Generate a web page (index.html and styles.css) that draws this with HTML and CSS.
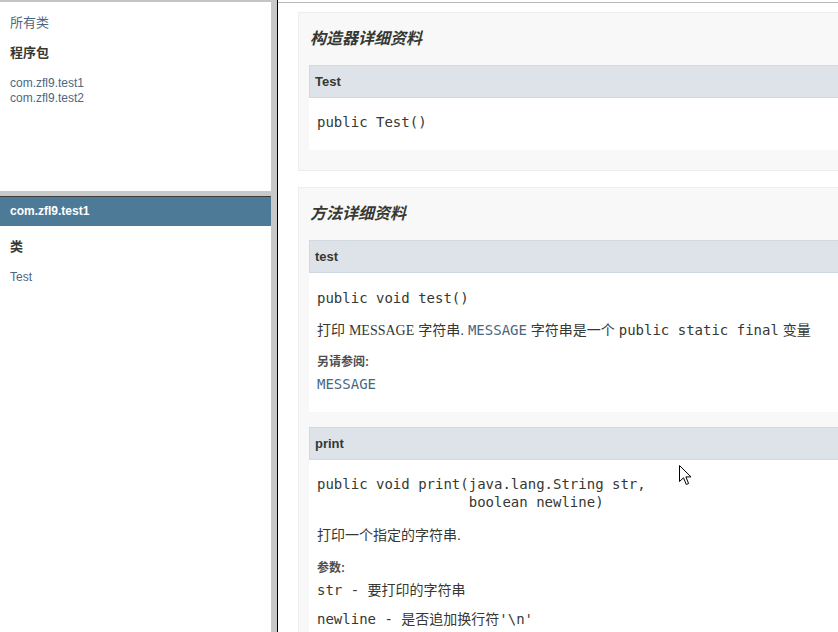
FILE: index.html
```html
<!DOCTYPE html>
<html lang="zh-CN">
<head>
<meta charset="utf-8">
<title>Test</title>
<link rel="stylesheet" href="styles.css">
</head>
<body>
<div class="frameset">
  <div class="left">
    <div class="pkg-frame">
      <div class="index-header">所有类</div>
      <h2 class="frame-title">程序包</h2>
      <ul class="frame-list">
        <li>com.zfl9.test1</li>
        <li>com.zfl9.test2</li>
      </ul>
    </div>
    <div class="hsplit"></div>
    <div class="cls-frame">
      <div class="bar">com.zfl9.test1</div>
      <h2 class="frame-title cls-title">类</h2>
      <ul class="frame-list cls-list">
        <li>Test</li>
      </ul>
    </div>
  </div>
  <div class="vsplit"></div>
  <div class="right">
    <section class="block">
      <h3 class="block-title">构造器详细资料</h3>
      <div class="member">
        <h4 class="member-name">Test</h4>
        <div class="member-body">
          <pre class="sig">public&nbsp;Test()</pre>
        </div>
      </div>
    </section>
    <section class="block second">
      <h3 class="block-title">方法详细资料</h3>
      <div class="member">
        <h4 class="member-name">test</h4>
        <div class="member-body">
          <pre class="sig">public&nbsp;void&nbsp;test()</pre>
          <p class="desc">打印 <span class="serif">MESSAGE</span> 字符串. <code class="link">MESSAGE</code> 字符串是一个 <code>public static final</code> 变量</p>
          <div class="label see-label">另请参阅:</div>
          <div class="mono-line link see-link">MESSAGE</div>
        </div>
      </div>
      <div class="member">
        <h4 class="member-name">print</h4>
        <div class="member-body print-body">
          <pre class="sig">public&nbsp;void&nbsp;print(java.lang.String&nbsp;str,
                  boolean&nbsp;newline)</pre>
          <p class="desc desc2">打印一个指定的字符串.</p>
          <div class="label param-label">参数:</div>
          <div class="mono-line param1">str - 要打印的字符串</div>
          <div class="mono-line param2">newline - 是否追加换行符'\n'</div>
        </div>
      </div>
    </section>
    <svg class="cursor" width="13" height="21" viewBox="0 0 13 21" aria-hidden="true">
      <path d="M0.5 0.5 L0.5 16.5 L4.5 12.8 L7.3 19.5 L9.6 18.5 L6.9 11.9 L12 11.9 Z" fill="#ffffff" stroke="#000000" stroke-width="1" stroke-linejoin="miter"/>
    </svg>
  </div>
</div>
</body>
</html>
```

FILE: styles.css
```css
html, body {
  margin: 0;
  padding: 0;
  background: #ffffff;
}

body {
  width: 838px;
  height: 632px;
  overflow: hidden;
  font-family: "Liberation Sans", Arial, "Noto Sans CJK SC", sans-serif;
  color: #353833;
}

.frameset {
  display: flex;
  height: 632px;
}

/* ---------- left column ---------- */
.left {
  width: 271px;
  flex: none;
  display: flex;
  flex-direction: column;
  border-top: 2px solid #c4c4c4;
}

.pkg-frame {
  height: 189px;
  padding: 13px 10px 0;
  box-sizing: border-box;
}

.index-header {
  font-size: 13px;
  line-height: 16px;
  color: #4a6782;
}

.frame-title {
  margin: 14px 0 0;
  font-size: 13px;
  line-height: 16px;
  font-weight: bold;
  color: #353833;
}

.frame-list {
  list-style: none;
  margin: 15px 0 0;
  padding: 0;
  font-size: 12px;
  line-height: 15px;
  color: #4a6782;
}

.hsplit {
  height: 5px;
  background: #c8c8c8;
  border-bottom: 1px solid #3c3c3c;
}

.cls-frame {
  flex: 1;
}

.bar {
  height: 29px;
  line-height: 29px;
  padding-left: 10px;
  background: #4d7a97;
  color: #ffffff;
  font-size: 12px;
  font-weight: bold;
}

.cls-title {
  margin: 13px 0 0 10px;
}

.cls-list {
  margin: 15px 0 0 10px;
}

/* ---------- splitter ---------- */
.vsplit {
  width: 6px;
  flex: none;
  background: #c8c8c8;
  border-right: 1px solid #000000;
}

/* ---------- right column ---------- */
.right {
  position: relative;
  flex: 1;
  overflow: hidden;
  margin-top: 2px;
  border-top: 1px solid #b8b8b8;
  padding-top: 9px;
}

.block {
  width: 700px;
  margin-left: 20px;
  padding: 0 10px 20px;
  background: #f8f8f8;
  border: 1px solid #ededed;
}

.block.second {
  margin-top: 16px;
}

.block-title {
  margin: 16px 0 16px 1px;
  font-size: 16px;
  line-height: 20px;
  font-style: italic;
  font-weight: bold;
  color: #353833;
}

.member + .member {
  margin-top: 15px;
}

.member-name {
  margin: 0;
  padding: 7px 5px;
  font-size: 13px;
  line-height: 17px;
  font-weight: bold;
  background: #dee3e9;
  border: 1px solid #d0d9e0;
  color: #353833;
}

.member-body {
  background: #ffffff;
  padding: 15px 8px 19px;
}

.second .member-body {
  padding-top: 16px;
  padding-bottom: 19px;
}

.second .print-body {
  padding-top: 15px;
}

.sig {
  margin: 0;
  font-family: "DejaVu Sans Mono", "Liberation Mono", monospace;
  font-size: 14px;
  line-height: 18px;
  color: #353833;
}

.desc {
  margin: 13px 0 0;
  font-size: 14px;
  line-height: 20px;
}

.desc2 {
  margin-top: 14px;
}

.serif {
  font-family: "Liberation Serif", "Times New Roman", serif;
}

code, .mono-line {
  font-family: "DejaVu Sans Mono", "Liberation Mono", "Noto Sans CJK SC", monospace;
  font-size: 14px;
}

.mono-line {
  line-height: 18px;
}

.link {
  color: #4a6782;
}

.label {
  font-size: 12px;
  line-height: 16px;
  font-weight: bold;
  color: #4e4e4e;
}

.see-label {
  margin-top: 13px;
}

.see-link {
  margin-top: 5px;
}

.param-label {
  margin-top: 15px;
}

.param1 {
  margin-top: 5px;
}

.param2 {
  margin-top: 11px;
}

.cursor {
  position: absolute;
  left: 401px;
  top: 462px;
}
```
